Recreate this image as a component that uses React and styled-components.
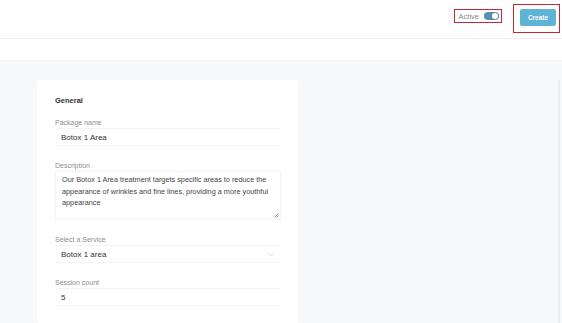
import React from "react";
import styled, { createGlobalStyle } from "styled-components";

const Global = createGlobalStyle`
  html, body {
    margin: 0;
    padding: 0;
    background: #ffffff;
    font-family: "Liberation Sans", Arial, sans-serif;
    overflow: hidden;
  }
`;

function Field({ label, children }) {
  return (
    <FieldWrap>
      <Label>{label}</Label>
      {children}
    </FieldWrap>
  );
}

export default function App() {
  return (
    <Page>
      <Global />
      <Header>
        <Highlight>
          <ToggleLabel>Active</ToggleLabel>
          <Switch>
            <Knob />
          </Switch>
        </Highlight>
        <ButtonFrame>
          <CreateButton>Create</CreateButton>
        </ButtonFrame>
      </Header>
      <SubBar />
      <Main>
        <Card>
          <CardTitle>General</CardTitle>
          <Field label="Package name">
            <Input>Botox 1 Area</Input>
          </Field>
          <Field label="Description">
            <TextArea>
              Our Botox 1 Area treatment targets specific areas to reduce the
              appearance of wrinkles and fine lines, providing a more youthful
              appearance
              <Resize>
                <svg width="5" height="5" viewBox="0 0 5 5">
                  <path d="M4.5 0.5 L0.5 4.5 M4.5 2.5 L2.5 4.5" stroke="#777" strokeWidth="0.8" />
                </svg>
              </Resize>
            </TextArea>
          </Field>
          <Field label="Select a Service">
            <Select>
              <span>Botox 1 area</span>
              <svg width="7" height="5" viewBox="0 0 7 5">
                <path d="M0.5 1 L3.5 4 L6.5 1" fill="none" stroke="#d4d4d4" strokeWidth="0.8" />
              </svg>
            </Select>
          </Field>
          <Field label="Session count">
            <Input>5</Input>
          </Field>
        </Card>
        <Scroll />
      </Main>
    </Page>
  );
}

const Page = styled.div`
  width: 562px;
  height: 323px;
  display: flex;
  flex-direction: column;
  overflow: hidden;
`;

const Header = styled.div`
  flex-shrink: 0;
  height: 39px;
  box-sizing: border-box;
  border-bottom: 1px solid #efefef;
  display: flex;
  align-items: flex-start;
  justify-content: flex-end;
  padding: 4px 2px 0 0;
  gap: 11px;
`;

const Highlight = styled.div`
  margin-top: 5px;
  height: 14px;
  box-sizing: border-box;
  border: 1.5px solid #c22a33;
  display: flex;
  align-items: center;
  gap: 5px;
  padding: 0 2px 0 4px;
`;

const ToggleLabel = styled.span`
  font-size: 7.5px;
  color: #8a8a8a;
`;

const Switch = styled.div`
  width: 15px;
  height: 8px;
  border-radius: 4px;
  background: #5a8fb4;
  position: relative;
`;

const Knob = styled.div`
  position: absolute;
  right: 1px;
  top: 1px;
  width: 6px;
  height: 6px;
  border-radius: 50%;
  background: #ffffff;
`;

const ButtonFrame = styled.div`
  width: 47px;
  height: 29px;
  box-sizing: border-box;
  border: 1.5px solid #c22a33;
  display: flex;
  align-items: flex-start;
  justify-content: flex-end;
  padding: 4px 3px 0 0;
`;

const CreateButton = styled.div`
  width: 36px;
  height: 17px;
  background: #5db4d4;
  border-radius: 2px;
  color: #ffffff;
  font-size: 6.5px;
  font-weight: bold;
  display: flex;
  align-items: center;
  justify-content: center;
`;

const SubBar = styled.div`
  flex-shrink: 0;
  height: 21px;
  background: #ffffff;
  border-bottom: 1px solid #f4f4f4;
`;

const Main = styled.div`
  flex: 1;
  min-height: 0;
  background: #f7f8f9;
  padding: 19px 0 0 37px;
  display: flex;
  justify-content: space-between;
`;

const Card = styled.div`
  width: 261px;
  flex-shrink: 0;
  background: #ffffff;
  border-radius: 3px;
  box-sizing: border-box;
  padding: 16px 17px 0 18px;
  display: flex;
  flex-direction: column;
`;

const CardTitle = styled.div`
  font-size: 7.5px;
  font-weight: bold;
  color: #333;
  margin-bottom: 14px;
`;

const FieldWrap = styled.div`
  flex-shrink: 0;
  display: flex;
  flex-direction: column;
  margin-bottom: 16px;
`;

const Label = styled.div`
  font-size: 7px;
  color: #8e8e8e;
  margin-bottom: 2px;
`;

const Input = styled.div`
  height: 18px;
  box-sizing: border-box;
  border-top: 1px solid #f3f3f3;
  border-bottom: 1px solid #f3f3f3;
  padding: 0 6px;
  display: flex;
  align-items: center;
  font-size: 8px;
  color: #333;
`;

const TextArea = styled.div`
  height: 49px;
  box-sizing: border-box;
  border: 1px solid #f4f4f4;
  padding: 2px 6px;
  font-size: 7.3px;
  line-height: 11.5px;
  color: #444;
  position: relative;
`;

const Resize = styled.div`
  position: absolute;
  right: 1px;
  bottom: 1px;
  line-height: 0;
`;

const Select = styled(Input)`
  justify-content: space-between;
  padding-right: 6px;
`;

const Scroll = styled.div`
  width: 2px;
  margin-right: 2px;
  background: #ececec;
`;
